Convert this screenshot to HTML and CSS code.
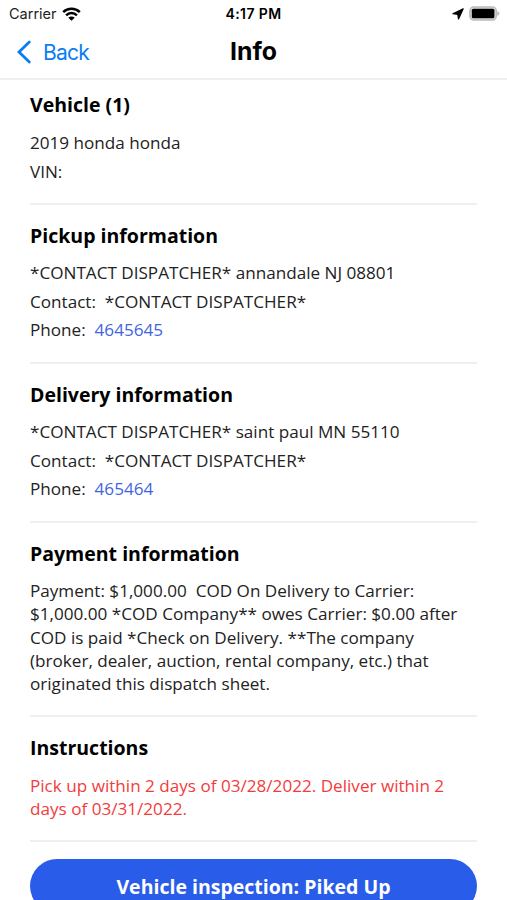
FILE: index.html
```html
<!DOCTYPE html>
<html lang="en">
<head>
  <meta charset="UTF-8">
  <meta name="viewport" content="width=device-width, initial-scale=1">
  <title>Info</title>
  <link rel="stylesheet" href="styles.css">
</head>
<body>
  <header class="header">
    <div class="status-bar">
      <div class="status-left">
        <span class="carrier">Carrier</span>
        <svg class="wifi" width="19" height="14" viewBox="0 0 19 14">
          <path d="M1.2 5.1a11.8 11.8 0 0 1 16.6 0M4.1 8.3a7.7 7.7 0 0 1 10.8 0" fill="none" stroke="#000" stroke-width="2.5"/>
          <path d="M9.5 13.8L6.3 10.8a4.5 4.5 0 0 1 6.4 0z"/>
        </svg>
      </div>
      <span class="time">4:17 PM</span>
      <div class="status-right">
        <svg width="12" height="12" viewBox="0 0 12 12">
          <path d="M11.2.8L6.5 11 5.8 6.3.9 5.7z" stroke="#000" stroke-width="1.2" stroke-linejoin="round"/>
        </svg>
        <svg width="31" height="15" viewBox="0 0 31 15">
          <rect x=".9" y=".9" width="26.4" height="13.2" rx="4" fill="#ddd" stroke="#bbb" stroke-width="1.5"/>
          <rect x="2.8" y="2.8" width="22.6" height="9.4" rx="1.5"/>
          <path d="M28.3 5.2c2.8.8 2.8 3.8 0 4.6z" fill="#b5b5b5"/>
        </svg>
      </div>
    </div>
    <nav class="nav-bar">
      <a class="back" href="#">
        <svg width="16" height="24" viewBox="0 0 16 24">
          <path d="M13.3 2L3 12l10.3 10" fill="none" stroke="#0a7cf5" stroke-width="2.8" stroke-linecap="round"/>
        </svg>
        <span>Back</span>
      </a>
      <h1 class="title">Info</h1>
    </nav>
  </header>

  <main class="content">
    <section class="section">
      <h2>Vehicle (1)</h2>
      <p>2019 honda honda</p>
      <p>VIN:</p>
    </section>
    <section class="section">
      <h2>Pickup information</h2>
      <p>*CONTACT DISPATCHER* annandale NJ 08801</p>
      <p>Contact:&nbsp; *CONTACT DISPATCHER*</p>
      <p>Phone:&nbsp; <a class="phone" href="tel:4645645">4645645</a></p>
    </section>
    <section class="section">
      <h2>Delivery information</h2>
      <p>*CONTACT DISPATCHER* saint paul MN 55110</p>
      <p>Contact:&nbsp; *CONTACT DISPATCHER*</p>
      <p>Phone:&nbsp; <a class="phone" href="tel:465464">465464</a></p>
    </section>
    <section class="section">
      <h2>Payment information</h2>
      <p>Payment: $1,000.00&nbsp; COD On Delivery to Carrier: $1,000.00 *COD Company** owes Carrier: $0.00 after COD is paid *Check on Delivery. **The company (broker, dealer, auction, rental company, etc.) that originated this dispatch sheet.</p>
    </section>
    <section class="section">
      <h2>Instructions</h2>
      <p class="instructions">Pick up within 2 days of 03/28/2022. Deliver within 2 days of 03/31/2022.</p>
    </section>
    <button class="inspect-btn">Vehicle inspection: Piked Up</button>
  </main>
</body>
</html>
```

FILE: styles.css
```css
* {
  box-sizing: border-box;
}
body {
  margin: 0;
  height: 900px;
  overflow: hidden;
  background: #fff;
  color: #222;
  font-family: "Open Sans", sans-serif;
  font-size: 17.12px;
}
h1, h2, p {
  margin: 0;
}
a {
  text-decoration: none;
}
.header {
  height: 80px;
  border-bottom: 2px solid #efefef;
  font-family: Inter, sans-serif;
}
.status-bar {
  display: grid;
  grid-template-columns: 1fr auto 1fr;
  align-items: center;
  height: 27px;
  padding: 0 7px 0 9px;
  font-size: 14.5px;
}
.status-left,
.status-right {
  display: flex;
  align-items: center;
  gap: 5px;
}
.status-right {
  justify-content: flex-end;
}
.carrier {
  color: #222;
}
.time {
  margin-right: 2px;
  color: #000;
  font-size: 14px;
  font-weight: 600;
  letter-spacing: 0.4px;
}
.nav-bar {
  display: grid;
  grid-template-columns: 1fr auto 1fr;
  align-items: center;
  height: 50px;
  padding: 0 16px;
}
.back {
  display: flex;
  align-items: center;
  gap: 11px;
  color: #0a7cf5;
  font-size: 21px;
  letter-spacing: -0.8px;
}
.title {
  margin-top: -2px;
  color: #000;
  font-size: 24.8px;
  font-weight: 700;
}
.content {
  padding: 0 30px;
}
.section {
  padding: 18px 0 14.5px;
  border-bottom: 2px solid #efefef;
}
.section:first-child {
  padding-top: 12.3px;
}
.section h2 {
  margin-bottom: 12.6px;
  color: #000;
  font-size: 19.5px;
  font-weight: 700;
  line-height: 26px;
}
.section p {
  margin-bottom: 5.35px;
  line-height: 23.28px;
}
.phone {
  color: #3f66e0;
}
.section .instructions {
  color: #f23c3c;
}
.inspect-btn {
  width: 100%;
  height: 54px;
  margin-top: 17px;
  border: 0;
  border-radius: 27px;
  background: #295ce8;
  color: #fff;
  font-family: inherit;
  font-size: 19.5px;
  font-weight: 700;
}
```
